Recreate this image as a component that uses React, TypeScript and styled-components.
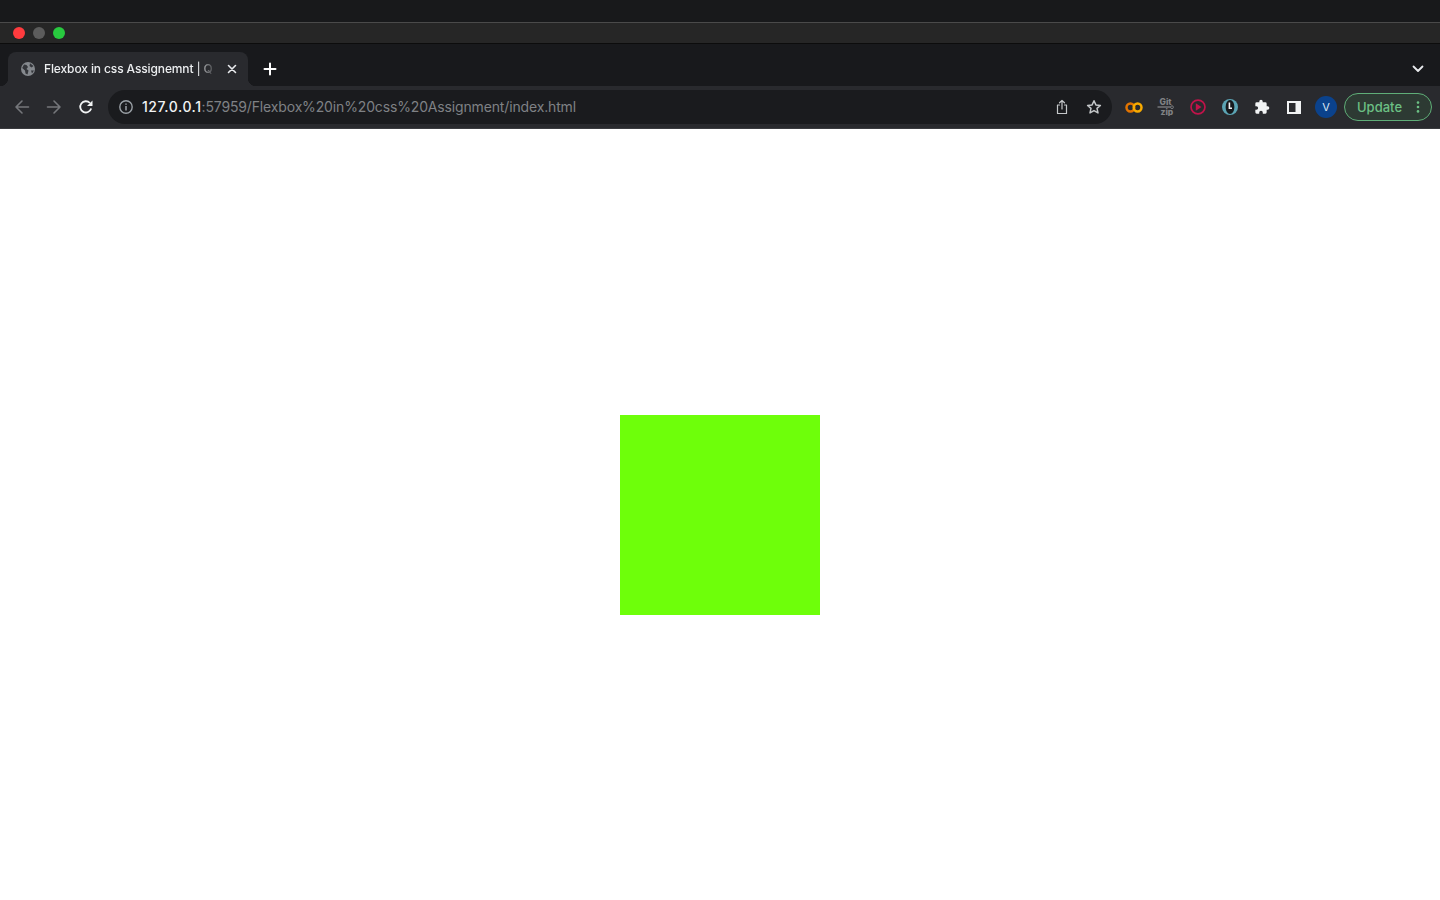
import React from "react";
import styled, { createGlobalStyle } from "styled-components";

const Global = createGlobalStyle`
  html, body { margin: 0; padding: 0; background: #fff; }
  body { font-family: Inter, "Liberation Sans", sans-serif; }
  #root { width: 1440px; height: 900px; overflow: hidden; }
`;
const Page = styled.div`
  width: 1440px; height: 900px; display: flex; flex-direction: column; background: #fff;
`;
const MenuBar = styled.div`height: 22px; background: #18191b;`;
const TitleBar = styled.div`
  height: 22px; box-sizing: border-box; background: #262626; border-top: 1px solid #4a4a4a; border-bottom: 1px solid #0c0c0c;
  display: flex; align-items: center; gap: 8px; padding-left: 13px;
`;
const Light = styled.span<{ $c: string }>`
  width: 12px; height: 12px; border-radius: 50%; background: ${p => p.$c};
`;
const TabStrip = styled.div`
  height: 42px; background: #18191c; display: flex; align-items: flex-end; padding-left: 8px;
`;
const Tab = styled.div`
  position: relative; width: 240px; height: 34px; background: #292a2e; border-radius: 8px 8px 0 0;
  display: flex; align-items: center; padding: 0 11px 0 13px; box-sizing: border-box; gap: 9px; color: #e8eaed;
  &::before, &::after {
    content: ""; position: absolute; bottom: 0; width: 8px; height: 8px;
  }
  &::before { left: -8px; background: radial-gradient(circle at 0 0, transparent 8px, #292a2e 8.5px); }
  &::after { right: -8px; background: radial-gradient(circle at 100% 0, transparent 8px, #292a2e 8.5px); }
`;
const TabTitle = styled.span`
  flex: none; width: 172px; padding-bottom: 2px; font-size: 12px; font-weight: 500; white-space: nowrap; letter-spacing: -0.12px; color: #eceef0;
  -webkit-mask-image: linear-gradient(to right, #000 88%, rgba(0,0,0,0.1) 99%);
  mask-image: linear-gradient(to right, #000 88%, rgba(0,0,0,0.1) 99%);
`;
const TabClose = styled.svg`margin-left: auto;`;
const Plus = styled.div`
  width: 28px; height: 34px; margin-left: 8px; display: flex; align-items: center; justify-content: center;
`;
const StripEnd = styled.div`
  margin-left: auto; width: 44px; height: 34px; display: flex; align-items: center; justify-content: center;
`;
const Toolbar = styled.div`
  height: 43px; background: #292a2e; display: flex; align-items: center; padding: 0 8px 0 6px; border-bottom: 1px solid #3a3b3f; box-sizing: border-box;
`;
const Nav = styled.div`
  width: 32px; height: 32px; display: flex; align-items: center; justify-content: center; flex: none;
`;
const Omnibox = styled.div`
  width: 1004px; height: 34px; margin-left: 6px; border-radius: 17px; background: #1a1b1e; display: flex; align-items: center;
  padding: 0 2px 0 10px; box-sizing: border-box; flex: none;
`;
const Url = styled.div`
  flex: 1; margin-left: 8px; padding-bottom: 1px; font-size: 14px; color: #7f8185; white-space: nowrap; letter-spacing: -0.15px;
`;
const Host = styled.span`color: #f1f3f4; font-weight: 500; letter-spacing: 0.55px;`;
const Extensions = styled.div`display: flex; align-items: center; margin-left: 6px;`;
const Avatar = styled.div`
  width: 22px; height: 22px; border-radius: 50%; background: #0b428c; color: #dce6f5; font-size: 11px;
  display: flex; align-items: center; justify-content: center;
`;
const Update = styled.div`
  width: 88px; height: 28px; border: 1px solid #5fae78; border-radius: 14px; box-sizing: border-box; margin-left: 2px;
  background: #2d3a33; color: #6cc084; font-size: 13px; font-weight: 500; display: flex; align-items: center; padding: 0 11px 0 12px; justify-content: space-between;
`;
const Content = styled.main`
  flex: 1; display: flex; align-items: center; justify-content: center; background: #fff;
`;
const GreenBox = styled.div`
  width: 200px; height: 200px; background: #6eff0a; margin-top: 1px;
`;

const Stroke = { fill: "none", strokeLinecap: "round" as const, strokeLinejoin: "round" as const };

export default function App() {
  return (
    <Page>
      <Global />
      <MenuBar />
      <TitleBar>
        <Light $c="#ff3b3e" />
        <Light $c="#5c5c5c" />
        <Light $c="#28c93f" />
      </TitleBar>
      <TabStrip>
        <Tab>
          <svg width="14" height="14" viewBox="0 0 14 14">
            <circle cx="7" cy="7" r="7" fill="#85898e" />
            <path d="M3 2.5 L5.5 3 L7 5 L5.5 7 L7.5 8.5 L6.5 12.5 L4.5 11.5 L4 8.5 L1.2 6 Z M9 1.2 L12.5 4 L10.5 5.5 L8.5 4 Z M10 8.5 L13 8.5 L11 11.5 Z" fill="#33353a" />
          </svg>
          <TabTitle>Flexbox in css Assignemnt | Q</TabTitle>
          <TabClose width="10" height="10" viewBox="0 0 10 10" {...Stroke} stroke="#e8eaed" strokeWidth="1.6">
            <path d="M1.5 1.5 L8.5 8.5 M8.5 1.5 L1.5 8.5" />
          </TabClose>
        </Tab>
        <Plus>
          <svg width="14" height="14" viewBox="0 0 14 14" {...Stroke} stroke="#fff" strokeWidth="2">
            <path d="M7 1.5 V12.5 M1.5 7 H12.5" />
          </svg>
        </Plus>
        <StripEnd>
          <svg width="12" height="8" viewBox="0 0 12 8" {...Stroke} stroke="#e8eaed" strokeWidth="1.8">
            <path d="M1.5 1.5 L6 6 L10.5 1.5" />
          </svg>
        </StripEnd>
      </TabStrip>
      <Toolbar>
        <Nav>
          <svg width="16" height="16" viewBox="0 0 16 16" {...Stroke} stroke="#75777b" strokeWidth="1.6">
            <path d="M14.5 8 H2 M8 2 L2 8 L8 14" />
          </svg>
        </Nav>
        <Nav>
          <svg width="16" height="16" viewBox="0 0 16 16" {...Stroke} stroke="#75777b" strokeWidth="1.6">
            <path d="M1.5 8 H14 M8 2 L14 8 L8 14" />
          </svg>
        </Nav>
        <Nav>
          <svg width="16" height="16" viewBox="0 0 16 16" fill="none">
            <path d="M13.2 9.5 A5.6 5.6 0 1 1 11.9 4" stroke="#f1f3f4" strokeWidth="1.8" />
            <path d="M14.5 1.5 V7 H9 Z" fill="#f1f3f4" />
          </svg>
        </Nav>
        <Omnibox>
          <svg width="16" height="16" viewBox="0 0 16 16" fill="none">
            <circle cx="8" cy="8" r="6.2" stroke="#9aa0a6" strokeWidth="1.4" />
            <path d="M8 7 V11.4 M8 4.6 V5.8" stroke="#9aa0a6" strokeWidth="1.5" />
          </svg>
          <Url><Host>127.0.0.1</Host>:57959/Flexbox%20in%20css%20Assignment/index.html</Url>
          <Nav>
            <svg width="14" height="16" viewBox="0 0 14 16" {...Stroke} stroke="#c4c7c9" strokeWidth="1.2">
              <path d="M4.5 6 H2.5 V14.5 H11.5 V6 H9.5 M7 10 V1.5 M4.5 3.8 L7 1.5 L9.5 3.8" />
            </svg>
          </Nav>
          <Nav>
            <svg width="16" height="16" viewBox="0 0 16 16" {...Stroke} stroke="#c4c7c9" strokeWidth="1.5">
              <path d="M8 1.8 L9.9 5.9 L14.4 6.4 L11 9.4 L12 13.9 L8 11.6 L4 13.9 L5 9.4 L1.6 6.4 L6.1 5.9 Z" />
            </svg>
          </Nav>
        </Omnibox>
        <Extensions>
          <Nav>
            <svg width="18" height="11" viewBox="0 0 18 11" fill="none" strokeWidth="2.5">
              <circle cx="5.4" cy="5.5" r="3.9" stroke="#e37400" />
              <circle cx="12.6" cy="5.5" r="3.9" stroke="#f9ab00" />
            </svg>
          </Nav>
          <Nav>
            <svg width="18" height="18" viewBox="0 0 18 18" fill="none">
              <text x="2.5" y="7" fontSize="8.5" fontWeight="800" fill="#808285" fontFamily="Inter, sans-serif">Git</text>
              <path d="M0.5 9 H13.5" stroke="#808285" strokeWidth="1.3" />
              <circle cx="15" cy="9.2" r="1.4" stroke="#808285" strokeWidth="0.9" />
              <text x="3.5" y="16.5" fontSize="8.5" fontWeight="800" fill="#808285" fontFamily="Inter, sans-serif">zip</text>
            </svg>
          </Nav>
          <Nav>
            <svg width="16" height="16" viewBox="0 0 17 17" fill="none">
              <circle cx="8.5" cy="8.5" r="7.4" stroke="#c0134a" strokeWidth="1.8" />
              <path d="M6.2 4.6 L12.2 8.5 L6.2 12.4 Z" fill="#c0134a" />
            </svg>
          </Nav>
          <Nav>
            <svg width="16" height="16" viewBox="0 0 16 16">
              <circle cx="8" cy="8" r="8" fill="#5ba4b4" />
              <ellipse cx="8" cy="8" rx="4.4" ry="7" fill="#16191c" />
              <path d="M7.4 3.4 V9.2 H10" stroke="#f1f3f4" strokeWidth="1.6" fill="none" />
            </svg>
          </Nav>
          <Nav>
            <svg width="16" height="16" viewBox="0 0 24 24" fill="#f1f3f4">
              <path d="M20.5 11H19V7a2 2 0 0 0-2-2h-4V3.5a2.5 2.5 0 0 0-5 0V5H4a2 2 0 0 0-2 2v3.8h1.5a2.7 2.7 0 0 1 0 5.4H2V20a2 2 0 0 0 2 2h3.8v-1.5a2.7 2.7 0 0 1 5.4 0V22H17a2 2 0 0 0 2-2v-4h1.5a2.5 2.5 0 0 0 0-5z" />
            </svg>
          </Nav>
          <Nav>
            <svg width="14" height="13" viewBox="0 0 14 13">
              <path d="M0 0 H14 V13 H0 Z M2 2 V11 H8.5 V2 Z" fill="#f1f3f4" fillRule="evenodd" />
            </svg>
          </Nav>
          <Nav><Avatar>V</Avatar></Nav>
          <Update>
            <span>Update</span>
            <svg width="4" height="14" viewBox="0 0 4 14" fill="#6cc084">
              <circle cx="2" cy="2.6" r="1.3" /><circle cx="2" cy="7" r="1.3" /><circle cx="2" cy="11.4" r="1.3" />
            </svg>
          </Update>
        </Extensions>
      </Toolbar>
      <Content>
        <GreenBox />
      </Content>
    </Page>
  );
}
